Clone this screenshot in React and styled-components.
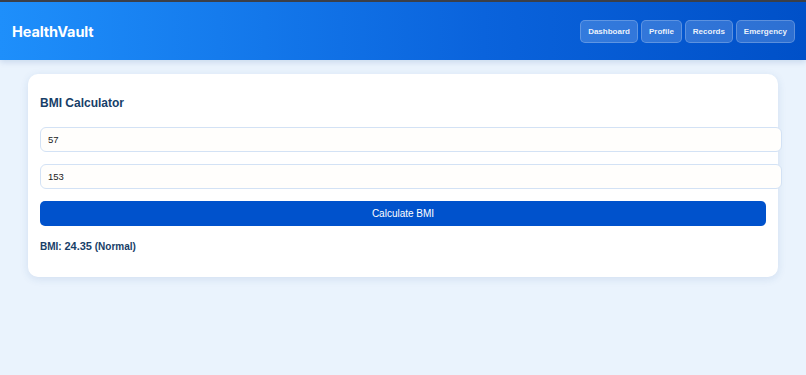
import React from "react";
import styled, { createGlobalStyle } from "styled-components";

const GlobalStyle = createGlobalStyle`
  body {
    margin: 0;
    background: #eaf3fd;
    font-family: "Liberation Sans", Arial, sans-serif;
  }
`;

function App() {
  return (
    <Page>
      <GlobalStyle />
      <Header>
        <Logo>HealthVault</Logo>
        <Nav>
          <NavButton>Dashboard</NavButton>
          <NavButton>Profile</NavButton>
          <NavButton>Records</NavButton>
          <NavButton>Emergency</NavButton>
        </Nav>
      </Header>
      <Main>
        <Card>
          <Title>BMI Calculator</Title>
          <Input type="text" defaultValue="57" />
          <Input type="text" defaultValue="153" />
          <Button>Calculate BMI</Button>
          <Result>
            BMI: <strong>24.35</strong> (Normal)
          </Result>
        </Card>
      </Main>
    </Page>
  );
}

const Page = styled.div`
  min-height: 375px;
  background: #eaf3fd;
  overflow: hidden;
`;

const Header = styled.header`
  height: 58px;
  border-top: 2px solid #3b3f48;
  background: linear-gradient(90deg, #1e8ffb 0%, #0a63dc 60%, #0050c8 100%);
  display: flex;
  align-items: center;
  justify-content: space-between;
  padding: 0 11px 0 12px;
  box-shadow: 0 2px 6px rgba(0, 60, 140, 0.15);
`;

const Logo = styled.div`
  color: #fff;
  font-family: Inter, "Liberation Sans", sans-serif;
  font-weight: 700;
  font-size: 14.5px;
  letter-spacing: -0.1px;
`;

const Nav = styled.nav`
  display: flex;
  gap: 3px;
`;

const NavButton = styled.button`
  height: 23px;
  padding: 0 7px;
  border: 1px solid rgba(255, 255, 255, 0.22);
  border-radius: 5px;
  background: rgba(255, 255, 255, 0.18);
  color: rgba(255, 255, 255, 0.92);
  font-family: "Liberation Sans", Arial, sans-serif;
  font-weight: 700;
  font-size: 8px;
  cursor: pointer;
`;

const Main = styled.main`
  padding: 14px 28px;
`;

const Card = styled.section`
  background: #fff;
  border-radius: 10px;
  box-shadow: 0 2px 8px rgba(30, 80, 150, 0.12);
  padding: 20px 12px 25px;
`;

const Title = styled.h2`
  margin: 0 0 15px;
  font-size: 12px;
  line-height: 18px;
  font-weight: 700;
  color: #173e68;
`;

const Input = styled.input`
  display: block;
  width: 100%;
  height: 23px;
  margin: 0 0 12px;
  padding: 0 7px;
  border: 1px solid #d3e2f5;
  border-radius: 6px;
  background: #fffefc;
  font-family: "Liberation Sans", Arial, sans-serif;
  font-size: 9.5px;
  color: #222;
  outline: none;
`;

const Button = styled.button`
  display: block;
  width: 100%;
  height: 25px;
  margin-top: 0;
  border: none;
  border-radius: 5px;
  background: #0052cc;
  color: #fff;
  font-family: "Liberation Sans", Arial, sans-serif;
  font-size: 10px;
  cursor: pointer;
`;

const Result = styled.p`
  margin: 14px 0 0;
  font-size: 10px;
  font-weight: 700;
  color: #173e68;

  strong {
    font-size: 11px;
  }
`;

export default App;
